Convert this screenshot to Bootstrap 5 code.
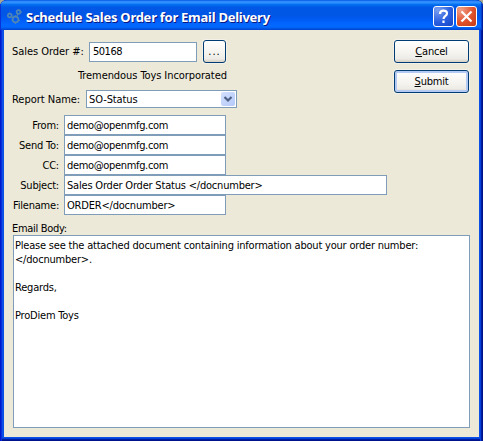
<!DOCTYPE html>
<html lang="en">
<head>
<meta charset="utf-8">
<title>Schedule Sales Order for Email Delivery</title>
<link href="https://cdn.jsdelivr.net/npm/bootstrap@5.3.0/dist/css/bootstrap.min.css" rel="stylesheet">
<style>
body{background:#a8a590;font:11px/14px "DejaVu Sans Condensed","DejaVu Sans",sans-serif;letter-spacing:-.2px;color:#000;overflow:hidden}
.xp-window{width:483px;height:441px;padding:0 4px 4px;border-radius:7px 7px 0 0;overflow:hidden;background:#0a50e6;box-shadow:inset 1px 0 #0019cf,inset 2px 0 #0831d9,inset -1px 0 #00138c,inset -2px 0 #001ea0,inset -3px 0 #0540dc,inset 0 -1px #00138c,inset 0 -2px #001ea0,inset 0 -3px #0441d8}
.xp-title{height:30px;margin:0 -4px;padding:3px 6px 0 7px;background:linear-gradient(#0058e6 0,#3a93ff 6%,#288eff 10%,#0570f0 15%,#0058e6 24%,#0055e5 50%,#005cf5 66%,#0267ff 80%,#0268ff 90%,#0050d8 97%,#003dd7 100%);box-shadow:inset 1px 0 #0831d9,inset -1px 0 #001ea0,inset -2px 0 #0440cc}
.xp-caption{font:bold 13px/20px "Noto Sans","Open Sans",sans-serif;letter-spacing:-.26px;color:#fff;text-shadow:1px 1px #0a1883;margin-left:4px}
.xp-body{height:407px;background:#ece9d8;padding:10px 9px 9px}
.xp-tool{width:21px;height:21px;border:1px solid #fff;border-radius:3px;background:radial-gradient(circle at 20% 15%,#7b9ff0,#2a5fe0 55%,#1546c4)}
.xp-close{margin-left:2px;background:radial-gradient(circle at 20% 15%,#f0a088,#e0522c 55%,#c23a12)}
.xp-field{height:20px;border:1px solid #7f9db9;background:#fff;padding:3px 2px 0;white-space:nowrap}
.mail{letter-spacing:-.33px}
.w-field{width:162px}.w-subject{width:323px}
.xp-btn{height:23px;border:1px solid #003c74;border-radius:3px;padding:0;background:linear-gradient(#fff,#f4f3ee 60%,#ecebe5 85%,#d8d0c4);font-size:11px;line-height:21px;letter-spacing:-.2px;color:#000;box-shadow:0 0 0 1px #f4f2e8}
.xp-wide{width:75px}.xp-dots{width:23px;letter-spacing:1px;margin-left:6px}
.xp-default{box-shadow:inset 0 0 0 2px #b4caf3,0 0 0 1px #f4f2e8}
.xp-order{width:108px;margin-left:5px;padding:2px 3px 0;letter-spacing:-.5px}
.xp-customer{margin:6px 0 7px 65px;height:14px;letter-spacing:-.08px}
.xp-combo{width:151px;height:18px;padding:0 1px 0 2px;line-height:18px;letter-spacing:-.1px}
.xp-arrow{width:14px;height:14px;border-radius:2px;background:linear-gradient(135deg,#d3e0fe,#b5c9f8)}
.xp-label{width:46px;padding-top:2px;text-align:right;margin-right:5px;white-space:nowrap}
.xp-text{width:457px;height:193px;border:1px solid #7f9db9;background:#fff;padding:3px 1px}
.order-label{width:72px;margin-left:-1px;letter-spacing:-.04px}
.report-label{width:74px;padding-top:2px;margin-left:-1px;letter-spacing:-.02px}
.side{gap:7px;margin-right:1px}
.fields{margin-top:7px}
.email-label{margin:7px 0 0 -1px;height:13px;letter-spacing:-.3px}
</style>
</head>
<body>
<main class="xp-window">
  <header class="xp-title d-flex align-items-center">
    <svg width="15" height="15" viewBox="0 0 15 15" fill="none" stroke="#4e86b5" stroke-width="1.7"><circle cx="2.700" cy="6.500" r="1.900"/><circle cx="8.500" cy="10.500" r="2.900"/><circle cx="11.500" cy="3" r="1.900"/><path d="M4.500 7.500l1.500 1M10.700 5l-.8 2.500" stroke-width="1.200"/><path d="M8.500 6.200v1M4.200 11h1M8.500 14v1M12 11.500h1M6 5.500l1 1M12 .2v1M14 3h1M2.500 3.500v1" stroke-width="1"/></svg>
    <span class="xp-caption flex-grow-1 text-nowrap">Schedule Sales Order for Email Delivery</span>
    <span class="xp-tool d-block"><svg class="d-block" width="19" height="19" fill="none" stroke="#fff" stroke-width="2.200"><path d="M6 7c0-4.600 7-4.400 7-.6C13 9 9.500 8.700 9.500 12"/><path d="M9.500 13.500v2.500"/></svg></span>
    <span class="xp-tool xp-close d-block"><svg class="d-block" width="19" height="19" fill="none" stroke="#fff" stroke-width="2.200"><path d="M4.500 4.500l10 10M14.500 4.500l-10 10"/></svg></span>
  </header>
  <section class="xp-body">
    <div class="d-flex justify-content-between">
      <div>
        <div class="d-flex align-items-center">
          <label class="text-nowrap order-label">Sales Order #:</label>
          <div class="xp-field xp-order">50168</div>
          <button class="btn xp-btn xp-dots">...</button>
        </div>
        <div class="xp-customer text-nowrap">Tremendous Toys Incorporated</div>
        <div class="d-flex align-items-center">
          <label class="text-nowrap report-label">Report Name:</label>
          <div class="xp-field xp-combo d-flex justify-content-between"><span>SO-Status</span><span class="xp-arrow my-auto"><svg class="d-block" width="14" height="14" fill="none" stroke="#4d6185" stroke-width="2.200"><path d="M3.500 5l3.500 3.500L10.500 5"/></svg></span></div>
        </div>
      </div>
      <div class="d-flex flex-column side">
        <button class="btn xp-btn xp-wide"><u>C</u>ancel</button>
        <button class="btn xp-btn xp-wide xp-default"><u>S</u>ubmit</button>
      </div>
    </div>
    <div class="fields">
      <div class="d-flex align-items-center"><label class="xp-label">From:</label><div class="xp-field w-field mail">demo@openmfg.com</div></div>
      <div class="d-flex align-items-center"><label class="xp-label">Send To:</label><div class="xp-field w-field mail">demo@openmfg.com</div></div>
      <div class="d-flex align-items-center"><label class="xp-label">CC:</label><div class="xp-field w-field mail">demo@openmfg.com</div></div>
      <div class="d-flex align-items-center"><label class="xp-label">Subject:</label><div class="xp-field w-subject">Sales Order Order Status &lt;/docnumber&gt;</div></div>
      <div class="d-flex align-items-center"><label class="xp-label">Filename:</label><div class="xp-field w-field">ORDER&lt;/docnumber&gt;</div></div>
    </div>
    <div class="email-label">Email Body:</div>
    <div class="xp-text">Please see the attached document containing information about your order number:<br>&lt;/docnumber&gt;.<br><br>Regards,<br><br>ProDiem Toys</div>
  </section>
</main>
</body>
</html>
